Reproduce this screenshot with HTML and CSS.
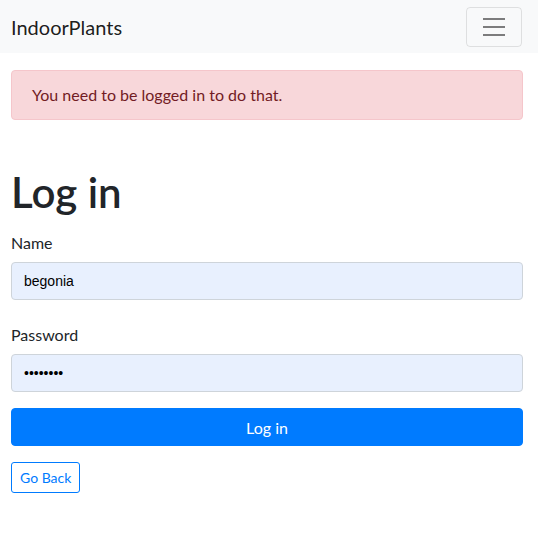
FILE: index.html
```html
<!DOCTYPE html>
<html lang="en">
<head>
<meta charset="utf-8">
<title>IndoorPlants - Log in</title>
<link rel="stylesheet" href="styles.css">
</head>
<body>
<nav class="navbar">
  <a class="brand" href="#">IndoorPlants</a>
  <button class="toggler" type="button" aria-label="Toggle navigation">
    <svg class="toggler-icon" viewBox="0 0 30 30" width="30" height="30"><path d="M4 7h22M4 15h22M4 23h22" stroke="rgba(0,0,0,0.5)" stroke-width="2" stroke-linecap="butt" fill="none"/></svg>
  </button>
</nav>
<main class="container">
  <div class="alert">You need to be logged in to do that.</div>
  <h1 class="title">Log in</h1>
  <form class="form">
    <div class="group">
      <label class="label" for="name">Name</label>
      <input class="input" id="name" type="text" value="begonia">
    </div>
    <div class="group">
      <label class="label" for="pw">Password</label>
      <input class="input" id="pw" type="password" value="begonia1">
    </div>
    <button class="btn-primary" type="button">Log in</button>
  </form>
  <a class="btn-outline" href="#">Go Back</a>
</main>
</body>
</html>
```
FILE: styles.css
```css
* { box-sizing: border-box; }
html, body { margin: 0; padding: 0; }
body {
  font-family: Lato, "Noto Sans", sans-serif;
  font-size: 16px;
  line-height: 1.5;
  color: #212529;
  background: #fff;
}
.navbar {
  background: #f8f9fa;
  height: 53px;
  display: flex;
  align-items: center;
  justify-content: space-between;
  padding: 0 16px 0 11px;
}
.brand {
  font-size: 20px;
  color: rgba(0,0,0,0.9);
  text-decoration: none;
  line-height: 30px;
}
.toggler {
  width: 56px;
  height: 40px;
  border: 1px solid rgba(0,0,0,0.1);
  border-radius: 4px;
  background: transparent;
  padding: 0;
  display: flex;
  align-items: center;
  justify-content: center;
}
.toggler-icon { display: block; }
.container {
  padding: 17px 15px 0 11px;
}
.alert {
  background: #f8d7da;
  border: 1px solid #f5c6cb;
  color: #721c24;
  border-radius: 4px;
  padding: 12px 20px;
  line-height: 24px;
  margin-bottom: 48px;
}
.title {
  font-size: 42px;
  font-weight: 600;
  line-height: 48px;
  margin: 0 0 15px;
}
.group { margin-bottom: 23px; }
.label {
  display: block;
  line-height: 24px;
  margin-bottom: 7px;
}
.input {
  display: block;
  width: 100%;
  height: 38px;
  padding: 6px 12px;
  font-family: "Liberation Sans", Arial, sans-serif;
  font-size: 14px;
  color: #000;
  background: #e8f0fe;
  border: 1px solid #ced4da;
  border-radius: 4px;
}
.group + .group { margin-bottom: 16px; }
.btn-primary {
  display: block;
  width: 100%;
  height: 38px;
  font-family: inherit;
  font-size: 16px;
  color: #fff;
  background: #007bff;
  border: 1px solid #007bff;
  border-radius: 4px;
  margin-bottom: 16px;
}
.btn-outline {
  display: inline-block;
  font-size: 14px;
  line-height: 21px;
  padding: 4px 8px;
  color: #007bff;
  border: 1px solid #007bff;
  border-radius: 3px;
  text-decoration: none;
}
```
